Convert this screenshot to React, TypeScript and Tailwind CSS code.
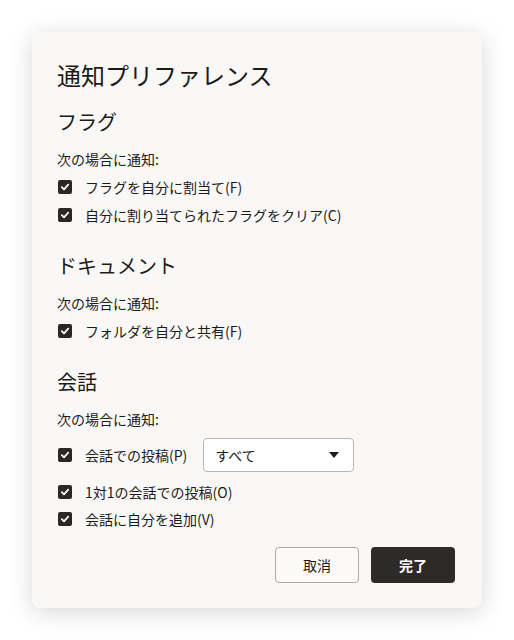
import React from 'react';

const Check: React.FC<{ label: string }> = ({ label }) => (
  <label className="flex items-center h-[28px] gap-[13px] pl-px">
    <span className="w-[14px] h-[14px] rounded-[2px] bg-[#2b2725] flex items-center justify-center">
      <svg width="10" height="10" viewBox="0 0 10 10">
        <path d="M1.8 5.2 L4 7.3 L8.2 2.6" fill="none" stroke="#fff" strokeWidth="1.8" strokeLinecap="round" strokeLinejoin="round" />
      </svg>
    </span>
    <span className="text-[14px] leading-5">{label}</span>
  </label>
);

const Section: React.FC<{ title: string; children: React.ReactNode; first?: boolean }> = ({ title, children, first }) => (
  <section className={first ? 'mt-[17px]' : 'mt-[23px]'}>
    <h2 className="text-[20px] leading-7">{title}</h2>
    <p className="text-[14px] leading-5 mt-[13px] mb-[4px]">次の場合に通知:</p>
    {children}
  </section>
);

const App: React.FC = () => {
  return (
    <div
      className="w-[514px] h-[640px] bg-white pt-[32px] pl-[32px]"
      style={{ fontFamily: '"Noto Sans CJK JP", "Noto Sans", sans-serif' }}
    >
      <div className="w-[450px] h-[576px] bg-[#f9f8f7] rounded-[8px] shadow-[0_4px_24px_rgba(0,0,0,0.16)] px-[25px] pt-[27px] text-[#1d1a19] flex flex-col">
        <h1 className="text-[24px] leading-8">通知プリファレンス</h1>

        <Section title="フラグ" first>
          <Check label="フラグを自分に割当て(F)" />
          <Check label="自分に割り当てられたフラグをクリア(C)" />
        </Section>

        <Section title="ドキュメント">
          <Check label="フォルダを自分と共有(F)" />
        </Section>

        <section className="mt-[23px]">
          <h2 className="text-[20px] leading-7">会話</h2>
          <p className="text-[14px] leading-5 mt-[13px]">次の場合に通知:</p>
          <div className="flex items-center mt-[9px] h-[34px]">
            <Check label="会話での投稿(P)" />
            <div className="ml-[16px] w-[151px] h-[34px] bg-white border border-[#b9b5b2] rounded-[4px] flex items-center justify-between pl-[11px] pr-[14px]">
              <span className="text-[14px]">すべて</span>
              <svg width="10" height="6" viewBox="0 0 10 6">
                <path d="M0 0 H10 L5 6 Z" fill="#1d1a19" />
              </svg>
            </div>
          </div>
          <div className="mt-[6px]">
            <Check label="1対1の会話での投稿(O)" />
            <div className="-mt-px">
              <Check label="会話に自分を追加(V)" />
            </div>
          </div>
        </section>

        <div className="flex justify-end gap-[12px] mt-[14px] pr-[2px]">
          <button className="w-[84px] h-[36px] rounded-[4px] border border-[#aeaaa7] bg-[#fbfaf9] text-[14px] text-[#1d1a19]">
            取消
          </button>
          <button className="w-[84px] h-[36px] rounded-[4px] bg-[#2e2a28] text-[14px] font-bold text-white">
            完了
          </button>
        </div>
      </div>
    </div>
  );
};

export default App;
